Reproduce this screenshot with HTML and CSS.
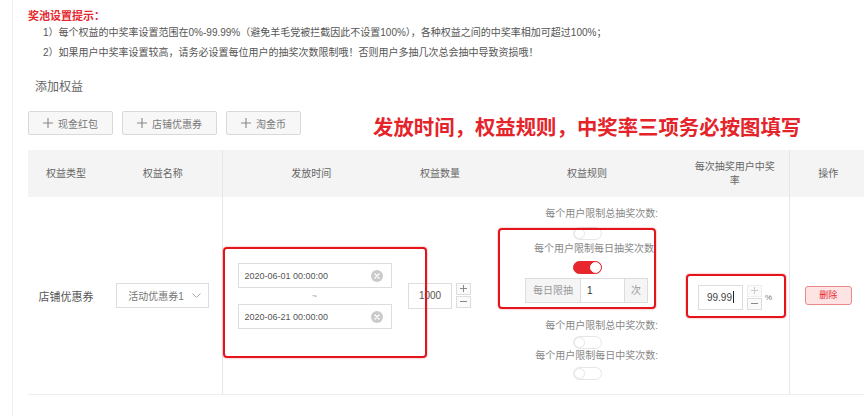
FILE: index.html
```html
<!DOCTYPE html>
<html lang="zh-CN">
<head>
    <meta charset="UTF-8">
    <title>添加权益</title>
    <link rel="stylesheet" href="styles.css">
</head>
<body>
<div class="page">
    <div class="tips">
        <p class="tips-title">奖池设置提示：</p>
        <p class="tip">1）每个权益的中奖率设置范围在0%-99.99%（避免羊毛党被拦截因此不设置100%），各种权益之间的中奖率相加可超过100%；</p>
        <p class="tip">2）如果用户中奖率设置较高，请务必设置每位用户的抽奖次数限制哦！否则用户多抽几次总会抽中导致资损哦！</p>
    </div>

    <h3 class="section-title">添加权益</h3>

    <div class="toolbar">
        <button class="add-btn"><svg width="10" height="10" viewBox="0 0 10 10"><path d="M5 0v10M0 5h10" stroke="#888" stroke-width="1.1"/></svg>现金红包</button>
        <button class="add-btn"><svg width="10" height="10" viewBox="0 0 10 10"><path d="M5 0v10M0 5h10" stroke="#888" stroke-width="1.1"/></svg>店铺优惠券</button>
        <button class="add-btn"><svg width="10" height="10" viewBox="0 0 10 10"><path d="M5 0v10M0 5h10" stroke="#888" stroke-width="1.1"/></svg>淘金币</button>
        <div class="notice">发放时间，权益规则，中奖率三项务必按图填写</div>
    </div>

    <table class="benefits">
        <colgroup>
            <col style="width:76px">
            <col style="width:118px">
            <col style="width:178px">
            <col style="width:80px">
            <col style="width:201px">
            <col style="width:108px">
            <col style="width:78px">
        </colgroup>
        <thead>
            <tr>
                <th>权益类型</th>
                <th>权益名称</th>
                <th class="divider">发放时间</th>
                <th>权益数量</th>
                <th class="rules-head">权益规则</th>
                <th>每次抽奖用户中奖率</th>
                <th class="divider">操作</th>
            </tr>
        </thead>
        <tbody>
            <tr>
                <td>店铺优惠券</td>
                <td>
                    <div class="select">
                        <span>活动优惠券1</span>
                        <svg width="9" height="5" viewBox="0 0 9 5"><path d="M.5.5l4 4 4-4" fill="none" stroke="#aaa"/></svg>
                    </div>
                </td>
                <td class="divider cell-left">
                    <div class="date-box">
                        <div class="date-input">
                            <span>2020-06-01 00:00:00</span>
                            <svg width="12" height="12" viewBox="0 0 12 12"><circle cx="6" cy="6" r="6" fill="#cacaca"/><path d="M4 4l4 4M8 4l-4 4" stroke="#fff" stroke-width="1.4" stroke-linecap="round"/></svg>
                        </div>
                        <div class="range-sep">~</div>
                        <div class="date-input">
                            <span>2020-06-21 00:00:00</span>
                            <svg width="12" height="12" viewBox="0 0 12 12"><circle cx="6" cy="6" r="6" fill="#cacaca"/><path d="M4 4l4 4M8 4l-4 4" stroke="#fff" stroke-width="1.4" stroke-linecap="round"/></svg>
                        </div>
                    </div>
                </td>
                <td class="cell-left">
                    <div class="stepper">
                        <div class="num-input">1000</div>
                        <div class="step-btns">
                            <span class="step"><svg width="7" height="7" viewBox="0 0 7 7"><path d="M3.5 0v7M0 3.5h7" stroke="#888"/></svg></span>
                            <span class="step"><svg width="7" height="7" viewBox="0 0 7 7"><path d="M0 3.5h7" stroke="#888"/></svg></span>
                        </div>
                    </div>
                </td>
                <td class="cell-left">
                    <div class="rules">
                        <div class="rule-label">每个用户限制总抽奖次数:</div>
                        <div class="switch first"></div>
                        <div class="rule-box">
                            <div class="rule-label inside">每个用户限制每日抽奖次数</div>
                            <div class="switch on"></div>
                            <div class="limit-group">
                                <span class="limit-prefix">每日限抽</span>
                                <span class="limit-value">1</span>
                                <span class="limit-suffix">次</span>
                            </div>
                        </div>
                        <div class="rule-label after-box">每个用户限制总中奖次数:</div>
                        <div class="switch"></div>
                        <div class="rule-label">每个用户限制每日中奖次数:</div>
                        <div class="switch last"></div>
                    </div>
                </td>
                <td class="cell-left">
                    <div class="rate-box">
                        <div class="rate-input">99.99<span class="caret"></span></div>
                        <div class="step-btns">
                            <span class="step disabled"><svg width="7" height="7" viewBox="0 0 7 7"><path d="M3.5 0v7M0 3.5h7" stroke="#ccc"/></svg></span>
                            <span class="step"><svg width="7" height="7" viewBox="0 0 7 7"><path d="M0 3.5h7" stroke="#888"/></svg></span>
                        </div>
                        <span class="percent">%</span>
                    </div>
                </td>
                <td class="divider">
                    <span class="del-btn">删除</span>
                </td>
            </tr>
        </tbody>
    </table>
</div>
</body>
</html>
```

FILE: styles.css
```css
body {
    margin: 0;
    font-family: "Liberation Sans", "Noto Sans CJK SC", sans-serif;
    background: #fff;
    overflow: hidden;
}
.page {
    margin-left: 12px;
    border-left: 1px solid #eee;
    padding: 9px 0 0 15px;
    min-height: 416px;
    box-sizing: border-box;
}
.tips p {
    margin: 0;
}
.tips-title {
    color: #e4282e;
    font-size: 11px;
    font-weight: bold;
    line-height: 14px;
}
.tip {
    font-size: 10px;
    line-height: 20px;
    color: #555;
    padding-left: 15px;
    white-space: nowrap;
}
.section-title {
    margin: 16px 0 0;
    padding-left: 7px;
    font-size: 12px;
    font-weight: normal;
    line-height: 16px;
    color: #666;
}
.toolbar {
    display: flex;
    align-items: flex-start;
    margin-top: 16px;
}
.add-btn {
    display: flex;
    align-items: center;
    gap: 5px;
    height: 24px;
    padding: 0 14px;
    margin-right: 9px;
    border: 1px solid #d9d9d9;
    border-radius: 2px;
    background: #f7f7f7;
    font-family: inherit;
    font-size: 10px;
    color: #777;
}
.notice {
    margin: 3px 0 0 63px;
    font-size: 20.4px;
    line-height: 28px;
    font-weight: bold;
    color: #e4232a;
    white-space: nowrap;
}

/* table */
.benefits {
    margin-top: 8px;
    width: 839px;
    border-collapse: collapse;
    table-layout: fixed;
}
.benefits th {
    height: 47px;
    padding: 0 12px;
    background: #f4f4f4;
    font-weight: normal;
    font-size: 10px;
    line-height: 14px;
    color: #666;
    text-align: center;
}
.benefits th.rules-head {
    padding-left: 25px;
}
.benefits td {
    height: 197px;
    padding: 0;
    border-bottom: 1px solid #eee;
    vertical-align: middle;
    text-align: center;
    font-size: 11px;
    color: #555;
}
.benefits td.cell-left {
    text-align: left;
}
.benefits .divider {
    border-left: 1px solid #e6e6e6;
}

.select {
    display: inline-flex;
    align-items: center;
    justify-content: space-between;
    width: 93px;
    height: 25px;
    box-sizing: border-box;
    padding: 0 7px 0 11px;
    border: 1px solid #ddd;
    font-size: 10px;
    color: #777;
}

/* red hint boxes */
.date-box,
.rule-box,
.rate-box {
    position: relative;
    z-index: 1;
    box-sizing: border-box;
    border: 2px solid #e3141c;
    border-radius: 4px;
    box-shadow: 0 0 2px rgba(220, 20, 28, 0.5);
}
.date-box {
    width: 204px;
    margin-top: 14px;
    padding: 14px 0 27px 13px;
}
.date-input {
    display: flex;
    align-items: center;
    justify-content: space-between;
    width: 154px;
    height: 25px;
    box-sizing: border-box;
    padding: 0 8px 0 6px;
    border: 1px solid #ddd;
    background: #fff;
    font-size: 9px;
    color: #555;
}
.range-sep {
    width: 154px;
    height: 16px;
    line-height: 16px;
    text-align: center;
    font-size: 9px;
    color: #aaa;
}

.stepper {
    display: flex;
    align-items: flex-start;
    gap: 4px;
    padding-left: 8px;
}
.num-input {
    display: flex;
    align-items: center;
    justify-content: center;
    width: 44px;
    height: 26px;
    box-sizing: border-box;
    border: 1px solid #ddd;
    background: #fff;
    font-size: 10px;
    color: #555;
}
.step-btns {
    display: flex;
    flex-direction: column;
    gap: 1px;
}
.step {
    display: flex;
    align-items: center;
    justify-content: center;
    width: 15px;
    height: 12px;
    box-sizing: border-box;
    border: 1px solid #ddd;
    background: #fafafa;
}
.step.disabled {
    border-color: #eee;
}

/* rules */
.rules {
    margin-bottom: 5px;
}
.rule-label {
    padding-right: 23px;
    line-height: 14px;
    font-size: 10px;
    color: #888;
    text-align: right;
    white-space: nowrap;
}
.rule-label.inside {
    padding-right: 0;
}
.rule-label.after-box {
    margin-top: 10px;
}
.switch {
    position: relative;
    width: 29px;
    height: 13px;
    box-sizing: border-box;
    margin: 3px 0 0 93px;
    border: 1px solid #e6e6e6;
    border-radius: 7px;
    background: #fff;
}
.switch::after {
    content: "";
    position: absolute;
    top: 0;
    left: 0;
    width: 11px;
    height: 11px;
    box-sizing: border-box;
    border: 1px solid #e6e6e6;
    border-radius: 50%;
    background: #fff;
}
.switch.first {
    margin-top: 6px;
}
.switch.last {
    margin-top: 4px;
}
.switch.on {
    border-color: #e8262d;
    background: #e8262d;
}
.switch.on::after {
    left: auto;
    right: 0;
    border-color: #fff;
}
.rule-box {
    width: 158px;
    margin: -12px 0 0 18px;
    padding: 12px 0 4px;
}
.rule-box .switch {
    margin: 5px 0 0 73px;
}
.limit-group {
    display: flex;
    width: 123px;
    height: 25px;
    box-sizing: border-box;
    margin: 4px 0 0 25px;
    border: 1px solid #ddd;
    font-size: 10px;
    line-height: 23px;
}
.limit-prefix {
    width: 54px;
    border-right: 1px solid #ddd;
    background: #f5f5f5;
    color: #999;
    text-align: center;
}
.limit-value {
    flex: 1;
    padding-left: 6px;
    background: #fff;
    color: #333;
}
.limit-suffix {
    width: 22px;
    border-left: 1px solid #ddd;
    background: #f5f5f5;
    color: #999;
    text-align: center;
}

/* rate */
.rate-box {
    display: flex;
    align-items: flex-start;
    gap: 4px;
    width: 100px;
    margin-left: 5px;
    padding: 9px 0 6px 10px;
}
.rate-input {
    display: flex;
    align-items: center;
    justify-content: flex-end;
    width: 45px;
    height: 25px;
    box-sizing: border-box;
    padding-right: 8px;
    border: 1px solid #ddd;
    font-size: 10px;
    color: #444;
}
.caret {
    width: 1px;
    height: 12px;
    margin-left: 1px;
    background: #222;
}
.percent {
    align-self: center;
    margin-left: -1px;
    font-size: 8px;
    color: #777;
}

.del-btn {
    display: inline-block;
    width: 47px;
    height: 19px;
    box-sizing: border-box;
    border: 1px solid #e88a8a;
    border-radius: 3px;
    background: #fde3e3;
    font-size: 9px;
    line-height: 17px;
    color: #e8262d;
}
```
